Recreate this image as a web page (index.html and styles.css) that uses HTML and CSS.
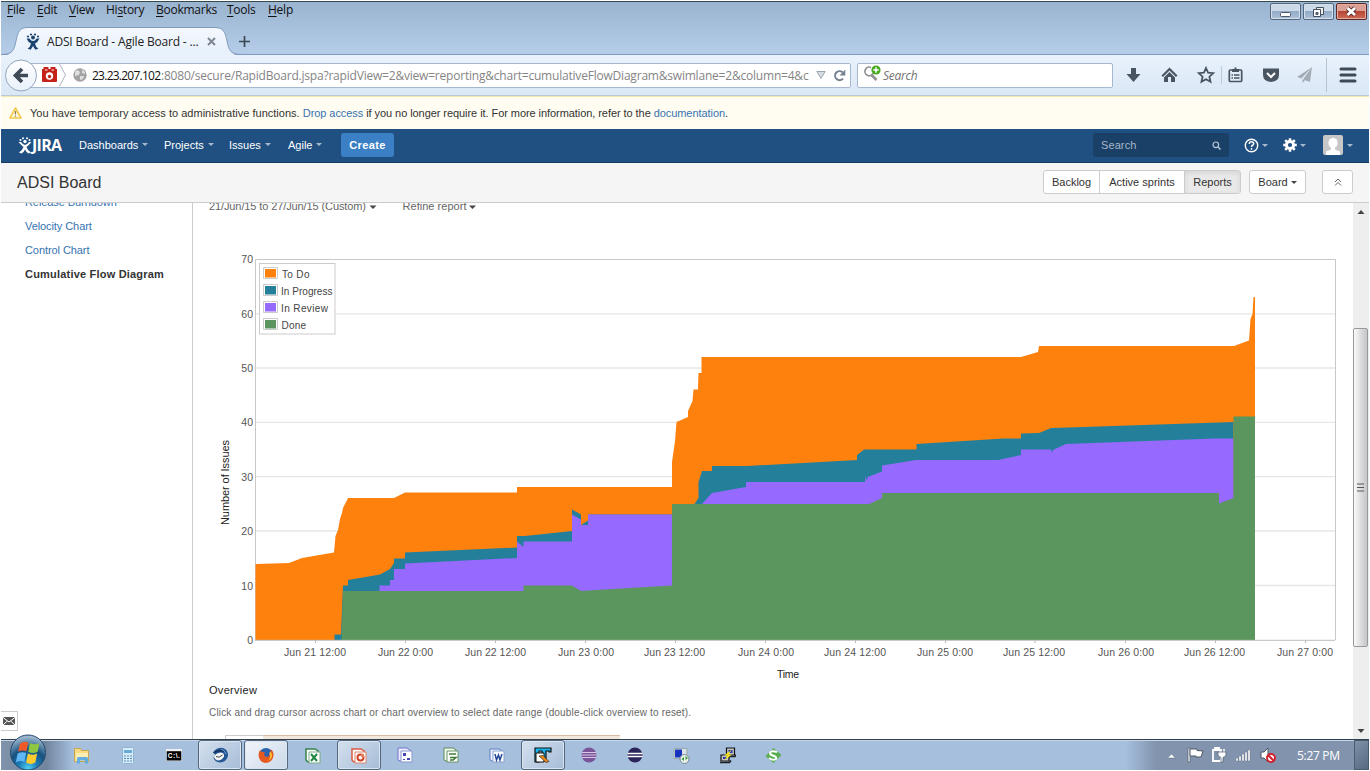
FILE: index.html
```html
<!DOCTYPE html>
<html lang="en">
<head>
<meta charset="utf-8">
<title>ADSI Board - Agile Board - JIRA</title>
<link rel="stylesheet" href="styles.css">
</head>
<body>
<div class="desktop">
  <header class="titlebar">
    <div class="title-top">
      <nav class="menubar">
        <span class="w30"><u>F</u>ile</span><span class="w32"><u>E</u>dit</span><span class="w37"><u>V</u>iew</span><span class="w50">Hi<u>s</u>tory</span><span class="w71"><u>B</u>ookmarks</span><span class="w41"><u>T</u>ools</span><span><u>H</u>elp</span>
      </nav>
      <div class="win-buttons">
        <span class="win-btn"><svg width="28" height="15"><rect x="9.500" y="8.500" width="10" height="4" rx="1" fill="#fff" stroke="#4e5a69"/></svg></span>
        <span class="win-btn"><svg width="28" height="15"><path d="M12.500 3.500h7v7h-7z" fill="#eee" stroke="#454f5d"/><path d="M9.500 5.500h7v7h-7z" fill="#fff" stroke="#454f5d"/><path d="M12 8.500h2v2h-2z" fill="#8195ae" stroke="#454f5d"/></svg></span>
        <span class="win-btn close"><svg width="28" height="15"><path d="M10.500 4l7.500 7m0-7l-7.500 7" stroke="#5a3030" stroke-width="4.600"/><path d="M10.500 4l7.500 7m0-7l-7.500 7" stroke="#fff" stroke-width="2.800"/></svg></span>
      </div>
    </div>
    <div class="tabs">
      <div class="tab">
        <svg class="tab-shape" width="250" height="29" viewBox="0 0 250 29"><defs><linearGradient id="tg" x2="0" y2="1"><stop stop-color="#f4f8fd"/><stop offset="1" stop-color="#e6f0fb"/></linearGradient></defs><path d="M0 29C11 28 13 24 15 14C17 4 19 .5 27 .5H213C222 .5 224 4 226 14C228 24 230 28 241 29z" fill="url(#tg)"/><path d="M0 27.500C11 27.500 13 24 15 14C17 4 19 .5 27 .5H213C222 .5 224 4 226 14C228 24 230 27.500 241 27.500" fill="none" stroke="#7f9bbb"/></svg>
        <div class="tab-content">
          <svg width="14" height="17" viewBox="0 0 14 17" fill="#1b4471"><circle cx="2" cy="3.500" r="1.100"/><circle cx="5" cy="1.500" r="1.100"/><circle cx="9" cy="1.500" r="1.100"/><circle cx="12" cy="3.500" r="1.100"/><circle cx="7" cy="4.500" r="1.900"/><path d="M.5 5.500Q2 9 5 10.500Q4.500 14 1.500 15.500L4.500 16.700Q6 15 7 13Q8 15 9.500 16.700L12.500 15.500Q9.500 14 9 10.500Q12 9 13.500 5.500L10.500 5.500Q9 8 7 8Q5 8 3.500 5.500z"/></svg>
          <span class="tab-title">ADSI Board - Agile Board - ...</span>
          <svg width="9" height="9" viewBox="0 0 9 9"><path d="M1 1l7 7M8 1l-7 7" stroke="#7d8691" stroke-width="2"/></svg>
        </div>
      </div>
      <svg class="plus" width="11" height="11"><path d="M5.500 0v11M0 5.500h11" stroke="#3c4856" stroke-width="1.700"/></svg>
    </div>
  </header>

  <div class="toolbar">
    <div class="urlbar">
      <svg class="back" width="34" height="33" viewBox="0 0 34 33"><defs><linearGradient id="bg" x2="0" y2="1"><stop stop-color="#fff"/><stop offset="1" stop-color="#e8f1fa"/></linearGradient></defs><circle cx="17" cy="16.500" r="15.500" fill="url(#bg)" stroke="#91a5bd"/><path d="M24 16.500H13M18 10L11.500 16.500L18 23" fill="none" stroke="#3f4a57" stroke-width="3.700"/></svg>
      <svg class="lego" width="31" height="22" viewBox="0 0 31 22"><path d="M4.500 3h5v2h2V3h5v2H18V17q0 1-1 1H4q-1 0-1-1V5h1.500z" fill="#c52219"/><path d="M6 6h2.500m4 0h2.500" stroke="#fff"/><circle cx="10.500" cy="12" r="3.700" fill="#fff"/><circle cx="10.500" cy="12.500" r="1.700" fill="#c52219"/><path d="M20.500 0l6 11l-6 11" fill="none" stroke="#a9b4c0"/></svg>
      <svg class="globe" width="14" height="14" viewBox="0 0 14 14"><circle cx="7" cy="7" r="6.700" fill="#a3a3a3"/><path d="M2 3l3-1l2 2l-1 3l-4 1zM9 1l3 3l0 2l-3-1zM7 8l4 0l-1 3l-3 1z" fill="#ddd"/></svg>
      <span class="url"><b>23.23.207.102</b><span class="path">:8080/secure/RapidBoard.jspa?rapidView=2&amp;view=reporting&amp;chart=cumulativeFlowDiagram&amp;swimlane=2&amp;column=4&amp;c</span></span>
      <svg class="drop" width="10" height="8"><path d="M.8.5h8.400L5 7.300z" fill="#d8dde3" stroke="#99a5b2"/></svg>
      <svg class="reload" width="13" height="13" viewBox="0 0 13 13"><path d="M10 9.600A4.500 4.500 0 1 1 9.500 3.200" fill="none" stroke="#75818f" stroke-width="2"/><path d="M12.300.5v6H6.500z" fill="#75818f"/></svg>
    </div>
    <div class="search">
      <svg width="20" height="18" viewBox="0 0 20 18"><path d="M8 2.500A4.300 4.300 0 1 0 10 8.500" fill="none" stroke="#909090" stroke-width="1.700"/><path d="M8.500 10l5 5" stroke="#909090" stroke-width="2.600"/><circle cx="13" cy="5" r="4.600" fill="#45a91c"/><path d="M13 2.300v5.400M10.300 5h5.400" stroke="#fff" stroke-width="1.500"/></svg>
      <span>Search</span>
    </div>
    <div class="tools">
      <svg width="30" height="20" viewBox="-14.500 -10 30 20"><path d="M-2.500-7h5v6h4.500L0 7L-7-1h4.500z" fill="#4a5562"/></svg>
      <svg width="42" height="20" viewBox="-20.500 -10 42 20"><path d="M0-7.500L8 .5L6.500 2L0-4.500L-6.500 2L-8 .5z" fill="#4a5562"/><path d="M0-3L5.500 2.500V7h-4V2h-3v5h-4V2.500z" fill="#4a5562"/></svg>
      <svg width="30" height="20" viewBox="-15 -10 30 20"><path d="M0-7L2.100-2.300L7.200-1.800L3.400 1.700L4.500 6.800L0 4.200L-4.500 6.800L-3.400 1.700L-7.200-1.800L-2.100-2.300z" fill="none" stroke="#4a5562" stroke-width="1.800"/></svg>
      <i class="thin"></i>
      <svg width="27" height="20" viewBox="-13.500 -10 27 20"><rect x="-6.200" y="-5" width="12.400" height="11.500" rx="1" fill="none" stroke="#4a5562" stroke-width="1.700"/><path d="M-3.500-6h2.500v-1.500h2v1.500h2.500v3h-7z" fill="#4a5562"/><path d="M-4 0h1.500m1 0h5.500M-4 3h1.500m1 0h5.500" stroke="#4a5562" stroke-width="1.400"/></svg>
      <svg width="44" height="20" viewBox="-22 -10 44 20"><path d="M-8-6.500h16v6q0 7-8 7.500q-8-.5-8-7.500z" fill="#4a5562"/><path d="M-4-2L0 2L4-2" fill="none" stroke="#fff" stroke-width="2"/></svg>
      <svg width="24" height="20" viewBox="-12 -10 24 20"><path d="M7-8L-8 2l4.500 1.500zM7-8L-2 4.500L5 7zM-2.500 4.500V8L0 5.500z" fill="#a4adb7"/></svg>
      <i class="sep"></i>
      <svg width="42" height="20" viewBox="-21 -10 42 20"><path d="M-7-6H7M-7 0H7M-7 6H7" stroke="#3f4a57" stroke-width="3" stroke-linecap="round"/></svg>
    </div>
  </div>

  <div class="notice">
    <svg width="13" height="12" viewBox="0 0 13 12"><path d="M6.500 1L12 11H1z" fill="#fffbe0" stroke="#f2c94c" stroke-width="1.600" stroke-linejoin="round"/><path d="M6.500 4v3.500m0 1v1.200" stroke="#8a7650" stroke-width="1.300"/></svg>
    <p><span class="lead">You have temporary access to administrative functions. </span><a>Drop access</a> if you no longer require it. For more information, refer to the <a>documentation</a>.</p>
  </div>

  <div class="jira">
    <div class="logo">
      <svg width="14" height="17" viewBox="0 0 14 17" fill="#fff"><circle cx="2.500" cy="3" r="1.100"/><circle cx="5" cy="1.200" r="1"/><circle cx="9" cy="1.200" r="1"/><circle cx="11.500" cy="3" r="1.100"/><circle cx="7" cy="4.500" r="1.700"/><path d="M.5 5Q3 8 5.500 10Q4.500 13.500 1 15.500L3.500 16.500Q6 15 7 12.500Q8 15 10.500 16.500L13 15.500Q9.500 13.500 8.500 10Q11 8 13.500 5L11 5Q9 8 7 8Q5 8 3 5z"/></svg>
      <span>JIRA</span>
    </div>
    <nav class="jnav"><span class="w85">Dashboards<i class="caret"></i></span><span class="w65">Projects<i class="caret"></i></span><span class="w59">Issues<i class="caret"></i></span><span class="w53">Agile<i class="caret"></i></span><button>Create</button></nav>
    <div class="jright">
      <div class="jsearch"><span>Search</span><svg width="9" height="9"><circle cx="3.800" cy="3.800" r="2.800" fill="none" stroke="#b9c9dc" stroke-width="1.200"/><path d="M6 6l2.500 2.500" stroke="#b9c9dc" stroke-width="1.500"/></svg></div>
      <div class="jicon"><svg width="15" height="15" viewBox="0 0 15 15"><circle cx="7.500" cy="7.500" r="6.200" fill="none" stroke="#fff" stroke-width="1.400"/><path d="M5.300 6Q5.300 3.800 7.500 3.800Q9.700 3.800 9.700 5.600Q9.700 6.800 8.300 7.500Q7.500 8 7.500 9M7.500 10v1.700" fill="none" stroke="#fff" stroke-width="1.500"/></svg><i class="caret"></i></div>
      <div class="jicon gear"><svg width="14" height="14" viewBox="-7 -7 14 14"><circle r="3.600" fill="none" stroke="#fff" stroke-width="3"/><path d="M0-6.800V-4M0 4v2.800M-6.800 0H-4M4 0h2.800M-4.800-4.800l2 2M2.800 2.800l2 2M-4.800 4.800l2-2M2.800-2.800l2-2" stroke="#fff" stroke-width="2.500"/></svg><i class="caret"></i></div>
      <div class="jicon avatar"><svg width="20" height="20" viewBox="0 0 20 20"><rect width="20" height="20" rx="2" fill="#c7c7c7"/><ellipse cx="10" cy="8" rx="4.600" ry="5.200" fill="#fff"/><path d="M8 11h4v3.500l5 2V20H3v-3.500L8 14.500z" fill="#fff"/></svg><i class="caret"></i></div>
    </div>
  </div>

  <div class="boardbar">
    <h1>ADSI Board</h1>
    <div class="group"><span class="g1">Backlog</span><span class="g2">Active sprints</span><span class="g3">Reports</span></div>
    <div class="btn board">Board<i class="caret dark"></i></div>
    <div class="btn collapse"><svg width="8" height="8"><path d="M1 4l3-3l3 3M1 7.500l3-3l3 3" fill="none" stroke="#666" stroke-width="1"/></svg></div>
  </div>

  <main>
    <aside>
      <ul><li>Release Burndown</li><li>Velocity Chart</li><li>Control Chart</li><li class="current">Cumulative Flow Diagram</li></ul>
      <div class="mail"><svg width="12" height="8"><rect width="12" height="8" rx="1" fill="#555"/><path d="M0 .5L6 5L12 .5M0 8L4.300 4M12 8L7.700 4" fill="none" stroke="#fff"/></svg></div>
    </aside>
    <section class="report">
      <svg class="chart" viewBox="193 203 1159 536" width="1159" height="536">
        <g font-size="11" fill="#666">
          <text x="209" y="210" textLength="157">21/Jun/15 to 27/Jun/15 (Custom)</text><path d="M369.500 205.500h7l-3.500 3.500z" fill="#444"/>
          <text x="402.500" y="210" textLength="64">Refine report</text><path d="M469 205.500h7l-3.500 3.500z" fill="#444"/>
        </g>
        <path d="M255 313.800H1335M255 368H1335M255 422.300H1335M255 476.700H1335M255 531H1335M255 585.500H1335" stroke="#e6e6e6" stroke-width="1.300"/>
        <path d="M255.500 640V259.500H1335.500V640" fill="none" stroke="#c8c8c8"/>
        <path d="M255.500 564L289 563L302 558L334 552.500L335.500 536L338 530L340 519L342 513L343 508L348 498H394L405 492.500H517V487H672V462L675 441L676.500 422L688 417V411L692.500 401L693.500 389.500H698L698.500 373H701.500V357H1021L1038 352L1039 346H1234L1249 340.500L1250.500 319L1252.500 314L1253.500 297H1255V418H1240V640H255.500z" fill="#ff810d" />
        <path d="M334.500 640V634.500H341L343 585.500H348V580L380 574.500L390 569L394 563V558.500H405V552.500L517 547.500V536H525L572 531V509.500L581 514.500V525L588 520.500V514.500H672V504H694.500L698.500 498V482L702 471H712V466H747L857 460V455L864 449.500H916.500V444L1003 438.500H1021V433.500L1039 433L1051 428L1068 427.500L1233.500 422V640z" fill="#24809a"/>
        <path d="M379.500 591V585.500H390V580H394V569H405V563.500L517 558V541.500L523.500 547V541.500H572V514.500L581 519.500V525H588V514.500H672V504H702L712 493L746 487V482H865L865.300 476L867 481L867.700 477L882 471.500V465.500L916 460H998L1021 455V449.500H1051L1052 453L1053 450L1066 444L1215 438.500H1233.500V640H379.500z" fill="#9669ff"/>
        <path d="M341.500 640L343 591H523.500V585.500H572L581 591L588 590.500L672 585.500V504H869L882 498V493H1219V503.500L1233.500 498V416.500H1255V640z" fill="#5b965e"/>
        <path d="M255 640.300H1335M315.500 640v3M405.500 640v3M495.500 640v3M585.500 640v3M675.500 640v3M765.500 640v3M855.500 640v3M945.500 640v3M1035 640v3M1125.500 640v3M1215.500 640v3M1305.500 640v3" stroke="#b9bdb9"/>
        <g font-size="10.500" fill="#555" text-anchor="end"><text x="253" y="263">70</text><text x="253" y="317.500">60</text><text x="253" y="372">50</text><text x="253" y="426">40</text><text x="253" y="480.500">30</text><text x="253" y="535">20</text><text x="253" y="589.500">10</text><text x="253" y="643.500">0</text></g>
        <g font-size="10.500" fill="#555"><text x="284" y="656" textLength="62">Jun 21 12:00</text><text x="378" y="656" textLength="55">Jun 22 0:00</text><text x="465" y="656" textLength="61">Jun 22 12:00</text><text x="558" y="656" textLength="56">Jun 23 0:00</text><text x="644" y="656" textLength="61">Jun 23 12:00</text><text x="738" y="656" textLength="56">Jun 24 0:00</text><text x="824" y="656" textLength="62">Jun 24 12:00</text><text x="917" y="656" textLength="56">Jun 25 0:00</text><text x="1003" y="656" textLength="62">Jun 25 12:00</text><text x="1098" y="656" textLength="56">Jun 26 0:00</text><text x="1184" y="656" textLength="61">Jun 26 12:00</text><text x="1277" y="656" textLength="56">Jun 27 0:00</text></g>
        <g font-size="11" fill="#222"><text x="777" y="677.500" font-size="10.500" textLength="22">Time</text><text transform="translate(229 525) rotate(-90)" textLength="85">Number of Issues</text><text x="209" y="694" textLength="48">Overview</text></g>
        <text x="209" y="716" textLength="482" font-size="10" fill="#666">Click and drag cursor across chart or chart overview to select date range (double-click overview to reset).</text>
        <rect x="259.500" y="263.500" width="75.500" height="70.500" fill="#fff" stroke="#ccc"/>
        <g stroke="#ccc" fill="#fff"><path d="M263.500 267.500h14v11h-14zM263.500 284.500h14v11h-14zM263.500 301.500h14v11h-14zM263.500 318.500h14v11h-14z"/></g>
        <path d="M265 269h11v8.500h-11z" fill="#ff810d"/><path d="M265 286h11v8.500h-11z" fill="#24809a"/><path d="M265 303h11v8.500h-11z" fill="#9669ff"/><path d="M265 320h11v8.500h-11z" fill="#5b965e"/>
        <g font-size="10" fill="#444"><text x="282" y="277.500" textLength="27.500">To Do</text><text x="281" y="294.500" textLength="51.500">In Progress</text><text x="281" y="311.500" textLength="47">In Review</text><text x="281.500" y="328.500" textLength="24.500">Done</text></g>
        <path d="M225.500 739V735.500H619.500V739" fill="#fff" stroke="#ccc"/><path d="M263 736h357v3H263z" fill="#f3e7dc"/><path d="M263 735.500h357" stroke="#d5bca8"/>
      </svg>
    </section>
    <div class="scrollbar">
      <svg class="arrow" width="15" height="18"><path d="M4.500 11h7L8 7z" fill="#444"/></svg>
      <div class="thumb"><svg width="8" height="9"><path d="M0 1h7M0 4.500h7M0 8h7" stroke="#555"/></svg></div>
      <svg class="arrow" width="15" height="17"><path d="M4.500 7h7L8 11z" fill="#444"/></svg>
    </div>
  </main>

  <footer class="taskbar">
    <div class="start"><svg width="38" height="36" viewBox="0 0 38 36"><defs><radialGradient id="orb" cy=".95" r=".9"><stop stop-color="#4fd0f2"/><stop offset=".3" stop-color="#1c7cb8"/><stop offset=".6" stop-color="#17507f"/><stop offset="1" stop-color="#9db9cf"/></radialGradient></defs><circle cx="19" cy="18.500" r="17.500" fill="url(#orb)" stroke="#26486b"/><g transform="translate(-2.600 -3.400) scale(1.180)"><path d="M11.500 11Q15 8.500 18.500 10L17 17.500Q13.500 16 10 18z" fill="#f05a28"/><path d="M20 10.500Q24 12.500 28 10.500L26.500 18Q22.500 20 18.500 18z" fill="#8fc73e"/><path d="M9.500 19.500Q13 17.500 16.700 19L15.200 26.500Q11.500 25 8 27z" fill="#5fb8f5"/><path d="M18.200 19.500Q22 21.500 26 19.500L24.500 27Q20.500 29.500 16.700 27z" fill="#ffcb2e"/></g></svg></div>
    <div class="apps">
      <span><svg width="18" height="17" viewBox="0 0 18 17"><path d="M1.500 1.500h6l1 2h7v11h-14z" fill="#f5dc83" stroke="#c9a752"/><path d="M3 6h12v8H3z" fill="#fbeeb0"/><path d="M4 16.500v-5q0-1.500 1.500-1.500h8q1.500 0 1.500 1.500v5h-3v-3H7v3z" fill="#63aee0"/></svg></span>
      <span><svg width="14" height="17" viewBox="0 0 14 17"><rect x="1.500" y=".5" width="11" height="16" rx="1" fill="#d9eaf8" stroke="#8fb4d2"/><path d="M3 3h8v3H3z" fill="#69aad8"/><path d="M3 9h8M3 11.500h8M3 14h8" stroke="#4d8ebb" stroke-dasharray="2 1"/></svg></span>
      <span><svg width="16" height="12" viewBox="0 0 16 12"><path d="M0 0h16v12H0z" fill="#eee"/><path d="M.7 2.200h14.600v9.300H.7z" fill="#000"/><text x="1.800" y="9.200" font-size="6.500" font-weight="700" fill="#fff" textLength="12">C:\.</text></svg></span>
      <span class="active"><svg width="17" height="16" viewBox="0 0 17 16"><path d="M2 4Q6 0 11 1Q16.500 3 16 9Q14 15.500 8 15.500Q3 15 1.500 11L3 8z" fill="#235693"/><path d="M2 10Q3 6 9 5.500Q12.500 6 12 9.500Q10 13.500 5.500 13.500Q2.500 12.500 2 10z" fill="#f4f4f4"/><path d="M4 9.500q3 2 6.500-1.500" fill="none" stroke="#444"/><path d="M1.500 6Q5 3 12 4" fill="none" stroke="#173966" stroke-width="2"/><path d="M9 2q4 1 5 5" fill="none" stroke="#6aa0d8"/></svg></span>
      <span class="active light"><svg width="16" height="16" viewBox="0 0 16 16"><circle cx="8" cy="8" r="7" fill="#2c63ae"/><path d="M2 3Q4 6 7 5Q5 8 8 10Q12 10 12 5Q14 2 13 2Q16 5 15.500 9Q14 16 7.500 16Q1 15 .5 8Q.7 5 2 3z" fill="#e65a20"/><path d="M13 5Q16 11 10 14Q14 9 11 6z" fill="#ffc636"/></svg></span>
      <span><svg width="17" height="17" viewBox="0 0 17 17"><path d="M2 2h9l3 2v11H4L2 13z" fill="#fff" stroke="#34844b" stroke-width="1.500"/><path d="M5 5h11v11H5z" fill="#fff" stroke="#7aab86"/><path d="M7 7l6 7M13 7l-6 7" stroke="#1e8643" stroke-width="2"/></svg></span>
      <span class="active"><svg width="17" height="17" viewBox="0 0 17 17"><path d="M2 2h9l3 2v11H4L2 13z" fill="#fff" stroke="#d95a3f" stroke-width="1.500"/><path d="M5 5h11v11H5z" fill="#fff" stroke="#d9816b"/><circle cx="10.500" cy="10.500" r="3" fill="none" stroke="#cf4122" stroke-width="2"/><path d="M11 7h3v3h-3z" fill="#e57f60"/></svg></span>
      <span><svg width="17" height="17" viewBox="0 0 17 17"><path d="M2 1h9l3 2v11H4L2 13z" fill="#e9edff" stroke="#7474ca"/><path d="M5 4h11v11H5z" fill="#fff" stroke="#8995ce"/><path d="M7 6h3v3H7zM11 11h3v2h-3zM7 12h2v1H7z" fill="#4646b7"/></svg></span>
      <span><svg width="17" height="17" viewBox="0 0 17 17"><path d="M2 1h9l3 2v11H4L2 13z" fill="#f2faef" stroke="#5c8954"/><path d="M5 4h11v11H5z" fill="#fff" stroke="#6b9464"/><path d="M7 7h7M8 10.500h6l-3 2.500H8" fill="none" stroke="#3e7936" stroke-width="1.500"/></svg></span>
      <span><svg width="17" height="17" viewBox="0 0 17 17"><path d="M2 2h9l3 2v10H4L2 13z" fill="#eef3ff" stroke="#5c7dc0"/><path d="M5 4h11v11H5z" fill="#fff" stroke="#8aa2cf"/><path d="M7 7l1.500 6L10.500 8l1.500 5l2-6" fill="none" stroke="#274a97" stroke-width="1.500"/></svg></span>
      <span class="active"><svg width="18" height="17" viewBox="0 0 18 17"><path d="M1 1h16v4h-2V4h-3v10H8V4H5v11H1z" fill="#19b5ef" stroke="#111" stroke-width="1.200"/><path d="M2 6h8v9H2z" fill="#fff" stroke="#111"/><path d="M5 9l4-.5l6 6l-3 1z" fill="#f38b1b" stroke="#111" stroke-width=".6"/></svg></span>
      <span><svg width="16" height="16"><circle cx="8" cy="8" r="7.500" fill="#79559b"/><path d="M1 5.500h14M.5 8h15M1 10.500h14" stroke="#dac8e7"/></svg></span>
      <span><svg width="16" height="16"><circle cx="8" cy="8" r="7.500" fill="#2c255b"/><path d="M.5 6.500h15M.5 9.500h15" stroke="#fff" stroke-width="1.400"/></svg></span>
      <span><svg width="17" height="17"><path d="M1 1.500h13v10H1z" fill="#dbe2e9" stroke="#9aa"/><path d="M2 2.500h7v8H2z" fill="#1733bd"/><circle cx="11.500" cy="12" r="4.500" fill="#e9f0e8" stroke="#789"/><path d="M8.500 12l2.500-2v4zm6.500-1l-2.500-2v4z" fill="#3a9b43"/></svg></span>
      <span><svg width="17" height="17"><path d="M7.500 1h8v7h-8zM2 8h8v6H2z" fill="#c4c4c4" stroke="#111" stroke-width="1.200"/><path d="M9.500 3h4v3h-4zM4 10h4v2H4z" fill="#2236a5"/><path d="M1 15.500h9.500l1.500-2M10 9.500h6l1-2" fill="none" stroke="#222" stroke-width="1.500"/><path d="M13 2.500L5 8.500h3.500l-3.500 5l8-6H9.500z" fill="#f6e51b"/></svg></span>
      <span><svg width="17" height="17"><path d="M8.500 1L16.500 8L8.500 16L.5 9z" fill="#5aae50"/><path d="M12 5Q6 3 5 6Q5 8 9 9Q12 10 11 12Q8 14 4 11" fill="none" stroke="#fff" stroke-width="2"/></svg></span>
    </div>
    <div class="tray">
      <svg width="18" height="24" viewBox="-6.500 -12 18 24"><path d="M-4 3h8L0-1z" fill="#fff" stroke="#56677e" stroke-width=".5"/></svg>
      <svg width="24" height="24" viewBox="-12 -12 24 24"><path d="M-7-7h2V7h-2z" fill="#fff" stroke="#4c5868" stroke-width=".7"/><path d="M-5-6H2v1.500L8-4L6 2H1V1h-6z" fill="#fff" stroke="#4c5868"/></svg>
      <svg width="24" height="24" viewBox="-12 -12 24 24"><path d="M-6-5h8V6h-8zM-4-7h4v2h-4z" fill="#8294ad" stroke="#fff" stroke-width="1.800"/><path d="M1-6v4M5-6v4" stroke="#fff" stroke-width="1.600"/><path d="M-1-3h8v3q-1 2-3 2.500V7H2V2.500Q0 2-1 0z" fill="#fff" stroke="#4c5868" stroke-width=".7"/></svg>
      <svg width="25" height="24" viewBox="-12 -12 25 24"><path d="M-7 3h2v3h-2zM-4 1h2v5h-2zM-1-1h2v7h-2zM2-3h2v9H2zM5-5h2V6H5z" fill="#fff" stroke="#5c6878" stroke-width=".4"/></svg>
      <svg width="24" height="24" viewBox="-12 -12 24 24"><path d="M-7-3h3L0-7V7L-4 3h-3z" fill="#fff" stroke="#4c5868"/><circle cx="3" cy="3" r="4" fill="#fff" stroke="#d3212d" stroke-width="2"/><path d="M0 0l6 6" stroke="#d3212d" stroke-width="2"/></svg>
      <span class="clock">5:27 PM</span>
      <i class="show"></i>
    </div>
  </footer>
</div>
</body>
</html>
```
FILE: styles.css
```css
* { box-sizing: border-box; }
body { margin: 0; background: #fff; font-family: "Liberation Sans", Arial, sans-serif; overflow: hidden; }
svg { display: block; flex: none; }
.desktop { width: 1368px; height: 769px; margin: 1px; display: flex; flex-direction: column; overflow: hidden; white-space: nowrap; }

/* browser chrome */
.titlebar { height: 54px; background: linear-gradient(#9ab3cf, #b5cde8); border-top: 1px solid #334b4d; border-bottom: 1px solid #7f9bbb; flex: none; font-family: "Open Sans", "Noto Sans", sans-serif; }
.title-top { display: flex; justify-content: space-between; height: 25px; }
.menubar { display: flex; padding: 0 0 0 6px; font-size: 12px; line-height: 16px; letter-spacing: -.25px; color: #111; }
.menubar u { text-underline-offset: 2px; }
.w30 { width: 30px; } .w32 { width: 32px; } .w37 { width: 37px; } .w50 { width: 50px; } .w71 { width: 71px; } .w41 { width: 41px; }
.win-buttons { display: flex; gap: 2px; padding: 1px 2px 0 0; }
.win-btn { width: 31px; height: 17px; border: 1px solid #53677f; border-radius: 2px; background: linear-gradient(#ccd9e8 45%, #93abc6 50%, #adc2da); box-shadow: inset 0 0 0 1px #d5e0ec; }
.close { border-color: #5d2825; background: linear-gradient(#dc9f94 45%, #b84634 50%, #cd6e57); box-shadow: inset 0 0 0 1px #e5aca1; }
.tabs { display: flex; align-items: flex-start; height: 29px; }
.tab { width: 238px; height: 29px; display: grid; }
.tab-shape { grid-area: 1 / 1; }
.tab-content { grid-area: 1 / 1; display: flex; align-items: center; padding: 0 0 1px 25px; z-index: 1; }
.tab-title { margin-left: 7px; width: 160px; font-size: 12px; letter-spacing: -.18px; color: #222; }
.plus { margin-top: 9px; }
.toolbar { height: 41px; flex: none; display: flex; align-items: center; background: linear-gradient(#e9f2fc, #dae7f5); border-bottom: 1px solid #b8c9d9; font-family: "Open Sans", "Noto Sans", sans-serif; font-size: 12px; }
.urlbar { display: flex; align-items: center; width: 832px; height: 25px; margin-left: 18px; border: 1px solid #a5b8cd; border-radius: 2px; background: #fff; }
.back { margin-left: -16px; }
.lego { margin-left: 1px; }
.globe { margin-left: 3px; }
.url { margin-left: 5px; width: 720px; color: #858585; display: flex; }
.url b { font-weight: 400; color: #111; letter-spacing: -.75px; width: 69px; }
.path { letter-spacing: -.205px; }
.drop { margin: 0 7px 0 4px; }
.search { display: flex; align-items: center; width: 256px; height: 25px; margin-left: 6px; padding-left: 5px; border: 1px solid #a5b8cd; border-radius: 2px; background: #fff; color: #737373; font-style: italic; letter-spacing: -.25px; }
.search svg { margin-top: -3px; }
.tools { display: flex; align-items: center; margin-left: 6px; }
.thin { width: 1px; height: 18px; background: #bdcad8; }
.sep { margin-left: 9px; width: 1px; height: 34px; background: #b5c3d2; }

/* administrative notice */
.notice { height: 33px; flex: none; display: flex; align-items: center; padding-left: 8px; background: #fffdf2; border-top: 1px solid #f3e8b0; font-size: 11px; color: #333; }
.notice p { margin: 0 0 0 8px; letter-spacing: -.065px; }
.notice .lead { letter-spacing: .02px; }
a { color: #3572b0; }

/* application header */
.jira { height: 34px; flex: none; display: flex; align-items: center; background: #205081; border-bottom: 1px solid #163963; color: #fff; padding-bottom: 1px; }
.logo { display: flex; align-items: center; width: 60px; padding-left: 17px; font: 700 16px/20px "Open Sans", sans-serif; letter-spacing: -.7px; }
.jnav { display: flex; align-items: center; margin-left: 18px; font-size: 11px; }
.caret { display: inline-block; margin-left: 4px; border: 3px solid transparent; border-top-color: #a6b9cd; border-bottom: 0; vertical-align: 3px; }
.w85 { width: 85px; } .w65 { width: 65px; } .w59 { width: 59px; } .w53 { width: 53px; }
.jnav button { width: 53px; height: 24px; padding: 0; border: 0; border-radius: 3px; background: #3b7fc4; color: #fff; font: 700 11px "Liberation Sans", sans-serif; letter-spacing: .4px; }
.jright { display: flex; align-items: center; margin-left: auto; padding-right: 16px; }
.jsearch { width: 136px; height: 24px; padding: 0 8px; display: flex; align-items: center; justify-content: space-between; background: #1a4067; border-radius: 3px; color: #a8b7c7; font-size: 11px; letter-spacing: .1px; }
.jicon { display: flex; align-items: center; margin-left: 15px; }
.jicon .caret { margin-left: 3px; }
.jicon.avatar { margin-left: 17px; }
.avatar .caret { margin-left: 4px; }

/* board bar */
.boardbar { height: 40px; flex: none; display: flex; align-items: center; background: #f5f5f5; border-bottom: 1px solid #ccc; padding: 0 16px 1px 16px; font-size: 11px; color: #333; }
h1 { margin: 2px auto 0 0; font-size: 16px; font-weight: 400; }
.group { display: flex; border: 1px solid #ccc; border-radius: 3px; background: #fff; height: 24px; line-height: 22px; text-align: center; }
.g1 { width: 55px; } .g2 { width: 86px; border-left: 1px solid #ccc; border-right: 1px solid #ccc; } .g3 { width: 55px; background: #e9e9e9; box-shadow: inset 0 2px 5px #d5d5d5; }
.btn { height: 24px; display: flex; align-items: center; justify-content: center; border: 1px solid #ccc; border-radius: 3px; background: #fff; }
.board { width: 57px; margin: 0 16px 0 8px; }
.dark { border-top-color: #444; margin-left: 3px; }
.collapse { width: 31px; }

/* report */
main { height: 536px; flex: none; display: flex; overflow: hidden; }
aside { width: 192px; border-right: 1px solid #ccc; display: flex; flex-direction: column; justify-content: space-between; font-size: 11px; }
ul { list-style: none; margin: -13px 0 0; padding: 0 0 0 24px; line-height: 24px; color: #3572b0; letter-spacing: -.08px; }
.current { color: #333; font-weight: 700; letter-spacing: .2px; }
.mail { width: 17px; height: 20px; margin-bottom: 8px; display: flex; align-items: center; padding-left: 2px; border: 1px solid #ccc; border-left: 0; }
.report { width: 1160px; }
.scrollbar { width: 16px; background: #eee; display: flex; flex-direction: column; }
.arrow { margin-bottom: 107px; }
.thumb { width: 15px; height: 319px; display: flex; align-items: center; justify-content: center; border: 1px solid #999; border-radius: 2px; background: linear-gradient(90deg, #fafafa, #dedee0 50%, #c4c5ca); }
.thumb + .arrow { margin: auto 0 0; }

/* taskbar */
.taskbar { height: 31px; flex: none; display: flex; align-items: center; border-top: 1px solid #35404e; box-shadow: inset 0 1px #c5d6e8; background: linear-gradient(90deg, #8193ab 0, #71859f 45px, #a5bfdd 72px, #a5bfdd 1125px, #8294ad 1155px, #8294ad); }
.start { width: 58px; height: 36px; padding-left: 8px; margin-top: -6px; z-index: 1; }
.apps { display: grid; grid-template-columns: repeat(16, 46.1px); height: 30px; }
.apps span { display: flex; align-items: center; justify-content: center; margin: 0 1px; }
.apps .active { border: 1px solid #53677f; border-radius: 3px; background: linear-gradient(135deg, #d4e0ee, #a6bcd7); box-shadow: inset 0 0 0 1px #dbe6f2; }
.apps .light { background: linear-gradient(135deg, #f1f5fa, #cbd9e9); }
.tray { display: flex; align-items: center; margin-left: auto; height: 30px; }
.clock { width: 57px; margin-left: 17px; font: 12px "Open Sans", sans-serif; letter-spacing: -.3px; color: #fff; }
.show { width: 15px; height: 30px; border: 1px solid #4b5b70; background: linear-gradient(135deg, #7f91a7, #566980); }
```
